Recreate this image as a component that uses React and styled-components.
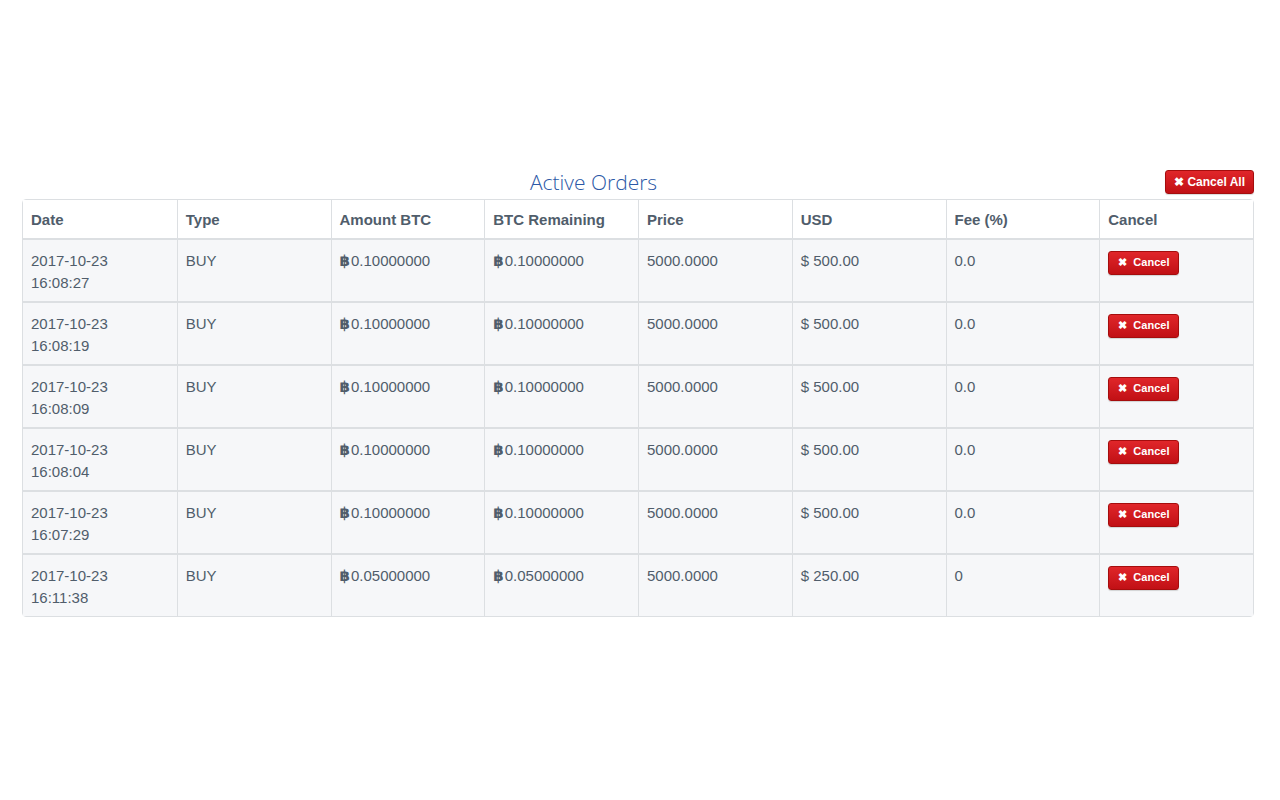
import React from 'react';
import styled, { createGlobalStyle } from 'styled-components';

const Global = createGlobalStyle`
  body { margin: 0; background: #fff; font-family: "Liberation Sans", Arial, sans-serif; }
`;

const Page = styled.div`
  padding: 165px 26px 0 22px;
`;

const TitleBar = styled.div`
  display: flex;
  align-items: center;
  height: 34px;
`;

const Title = styled.h2`
  flex: 1;
  margin: 0;
  text-align: center;
  font-family: "Open Sans", sans-serif;
  font-weight: 300;
  font-size: 21px;
  color: #2b58a6;
`;

const RedButton = styled.button`
  display: inline-flex;
  align-items: center;
  gap: 4px;
  border: 1px solid #a50d0d;
  border-radius: 3px;
  background: linear-gradient(#e0262a, #c11015);
  color: #fff;
  font-family: "Liberation Sans", Arial, sans-serif;
  font-weight: 700;
  font-size: ${p => (p.$big ? '12px' : '11px')};
  height: ${p => (p.$big ? '24px' : '24px')};
  padding: ${p => (p.$big ? '0 8px' : '0 9px')};
  box-shadow: 0 1px 1px rgba(0,0,0,0.15);
  cursor: pointer;
`;

const Table = styled.table`
  width: 100%;
  border-collapse: separate;
  border-spacing: 0;
  border: 1px solid #dcdfe2;
  border-radius: 4px;
  table-layout: fixed;
  color: #505d6b;
  font-size: 15px;
`;

const Th = styled.th`
  text-align: left;
  font-weight: 700;
  height: 38px;
  padding: 0 8px;
  border-left: ${p => (p.$first ? 'none' : '1px solid #dcdfe2')};
  border-bottom: 2px solid #dcdfe2;
  background: #fff;
`;

const Td = styled.td`
  vertical-align: top;
  padding: 10px 8px 0;
  height: 51px;
  line-height: 22px;
  background: #f6f7f9;
  border-left: ${p => (p.$first ? 'none' : '1px solid #dcdfe2')};
  border-top: ${p => (p.$top ? 'none' : '2px solid #dcdfe2')};
`;

const Btc = styled.span`
  font-family: "DejaVu Sans", sans-serif;
  font-weight: 700;
  font-size: 15px;
  margin-right: 1px;
`;

const orders = [
  ['2017-10-23', '16:08:27', '0.10000000', '500.00', '0.0'],
  ['2017-10-23', '16:08:19', '0.10000000', '500.00', '0.0'],
  ['2017-10-23', '16:08:09', '0.10000000', '500.00', '0.0'],
  ['2017-10-23', '16:08:04', '0.10000000', '500.00', '0.0'],
  ['2017-10-23', '16:07:29', '0.10000000', '500.00', '0.0'],
  ['2017-10-23', '16:11:38', '0.05000000', '250.00', '0'],
];

const heads = ['Date', 'Type', 'Amount BTC', 'BTC Remaining', 'Price', 'USD', 'Fee (%)', 'Cancel'];

export default function App() {
  return (
    <Page>
      <Global />
      <TitleBar>
        <Title>Active Orders</Title>
        <RedButton $big>✖ Cancel All</RedButton>
      </TitleBar>
      <Table>
        <thead>
          <tr>{heads.map((h, i) => <Th key={h} $first={i === 0}>{h}</Th>)}</tr>
        </thead>
        <tbody>
          {orders.map(([d, t, amt, usd, fee], r) => (
            <tr key={r}>
              <Td $first $top={r === 0}>{d}<br />{t}</Td>
              <Td $top={r === 0}>BUY</Td>
              <Td $top={r === 0}><Btc>฿</Btc>{amt}</Td>
              <Td $top={r === 0}><Btc>฿</Btc>{amt}</Td>
              <Td $top={r === 0}>5000.0000</Td>
              <Td $top={r === 0}>$ {usd}</Td>
              <Td $top={r === 0}>{fee}</Td>
              <Td $top={r === 0}><RedButton>✖&nbsp; Cancel</RedButton></Td>
            </tr>
          ))}
        </tbody>
      </Table>
    </Page>
  );
}
